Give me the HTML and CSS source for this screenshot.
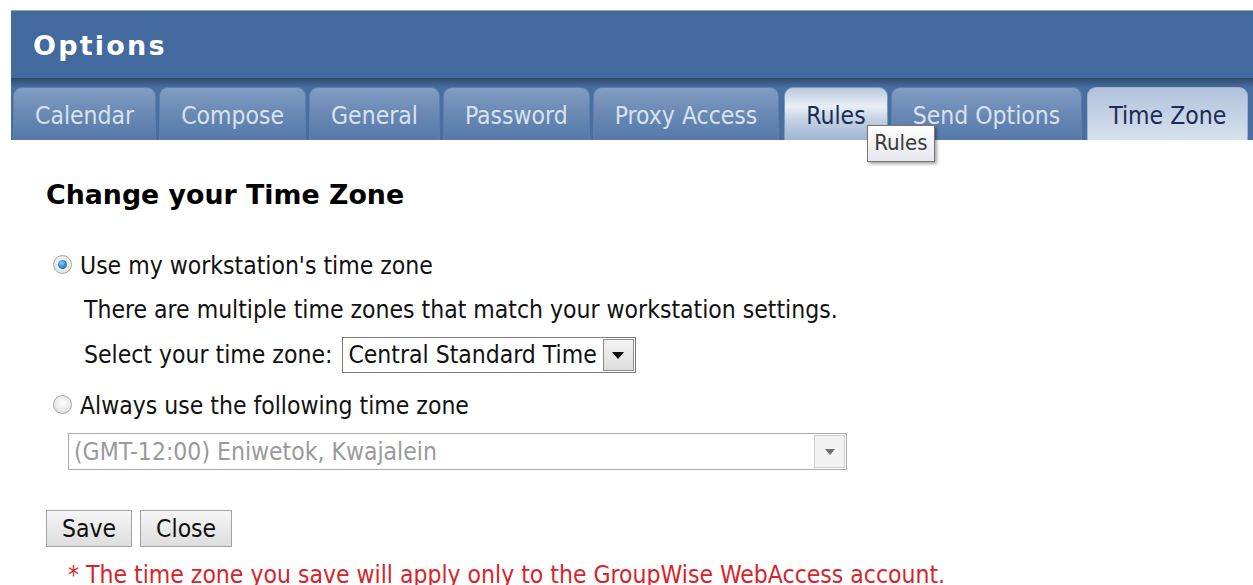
FILE: index.html
```html
<!DOCTYPE html>
<html lang="en">
<head>
<meta charset="utf-8">
<title>Options</title>
<link rel="stylesheet" href="styles.css">
</head>
<body>
<div class="window">
  <div class="titlebar"><span class="title">Options</span></div>
  <div class="tabbar">
    <div class="tab">Calendar</div>
    <div class="tab">Compose</div>
    <div class="tab">General</div>
    <div class="tab">Password</div>
    <div class="tab">Proxy Access</div>
    <div class="tab tab-hover">Rules<span class="tooltip">Rules</span></div>
    <div class="tab">Send Options</div>
    <div class="tab tab-active">Time Zone</div>
  </div>
  <div class="content">
    <h1 class="heading">Change your Time Zone</h1>
    <label class="radio-row">
      <input type="radio" name="tz" class="radio" checked>
      <span>Use my workstation's time zone</span>
    </label>
    <p class="info">There are multiple time zones that match your workstation settings.</p>
    <div class="select-row">
      <span>Select your time zone:</span>
      <div class="select select-small">
        <span class="select-value">Central Standard Time</span>
        <span class="select-btn"><span class="arrow"></span></span>
      </div>
    </div>
    <label class="radio-row radio-row-2">
      <input type="radio" name="tz" class="radio">
      <span>Always use the following time zone</span>
    </label>
    <div class="select select-wide disabled">
      <span class="select-value">(GMT-12:00) Eniwetok, Kwajalein</span>
      <span class="select-btn"><span class="arrow"></span></span>
    </div>
    <div class="buttons">
      <button class="btn">Save</button>
      <button class="btn">Close</button>
    </div>
    <p class="note">* The time zone you save will apply only to the GroupWise WebAccess account.</p>
  </div>
</div>
</body>
</html>
```

FILE: styles.css
```css
html, body {
  margin: 0;
  padding: 0;
  background: #ffffff;
  overflow: hidden;
}

body {
  font-family: "DejaVu Sans Condensed", "DejaVu Sans", sans-serif;
  font-size: 24.5px;
  line-height: 28px;
  color: #111111;
}

.window {
  margin: 10px 0 0 11px;
  border-top: 1px solid #9aa3ad;
}

.titlebar {
  height: 67px;
  box-sizing: border-box;
  padding: 3px 0 0 22px;
  background: #436a9e;
  display: flex;
  align-items: center;
}

.title {
  color: #ffffff;
  font-family: "DejaVu Sans", sans-serif;
  font-weight: bold;
  font-size: 27px;
  letter-spacing: 2.2px;
}

.tabbar {
  height: 62px;
  background: linear-gradient(to bottom, #2f4a6e 0px, #3d5d89 5px, #4a6ea0 10px, #4a6ea0 100%);
  display: flex;
  align-items: flex-end;
  gap: 3px;
  padding-left: 2px;
}

.tab {
  position: relative;
  height: 53px;
  box-sizing: border-box;
  padding: 4px 21px 0;
  display: flex;
  align-items: center;
  color: #d8e2ef;
  background: linear-gradient(to bottom, #819dc3 0%, #6e8cb6 40%, #5479aa 100%);
  border: 1px solid #5c7fae;
  border-bottom: none;
  border-radius: 9px 9px 0 0;
  white-space: nowrap;
}

.tab-hover {
  color: #1d2b57;
  margin-left: 2px;
  background: linear-gradient(to bottom, #b9c9de 0%, #e9eef5 35%, #c5d3e4 60%, #9fb6d3 100%);
  border-color: #7c98bf;
}

.tab-active {
  color: #1d2b57;
  margin-left: 2px;
  background: linear-gradient(to bottom, #afc2dc 0%, #c3d2e5 50%, #d8e2ee 100%);
  border-color: #9cb3d1;
}

.tooltip {
  position: absolute;
  left: 82px;
  top: 37px;
  padding: 3px 6px 4px;
  font-size: 22px;
  color: #3a3a3a;
  background: linear-gradient(to bottom, #ffffff, #e6e6ee);
  border: 1px solid #767676;
  box-shadow: 2px 2px 3px rgba(0, 0, 0, 0.35);
  z-index: 2;
}

.content {
  padding: 39px 0 0 35px;
}

.heading {
  margin: 0 0 41px;
  font-family: "DejaVu Sans", sans-serif;
  font-size: 26.8px;
  line-height: 32px;
  font-weight: bold;
  color: #000000;
}

.radio-row {
  display: flex;
  align-items: center;
  gap: 8px;
  padding-left: 7px;
  height: 28px;
}

.radio {
  appearance: none;
  -webkit-appearance: none;
  margin: 0;
  width: 19px;
  height: 19px;
  border-radius: 50%;
  border: 1px solid #a7a7a7;
  background: radial-gradient(circle at 50% 40%, #ffffff 0%, #e4e4e4 70%, #cfcfcf 100%);
  position: relative;
  top: -2px;
}

.radio:checked::after {
  content: "";
  position: absolute;
  left: 4px;
  top: 4px;
  width: 9px;
  height: 9px;
  border-radius: 50%;
  background: radial-gradient(circle at 40% 35%, #8fd0f5 0%, #2a8ad0 50%, #1a5e98 100%);
}

.info {
  margin: 16px 0 0 38px;
}

.select-row {
  margin: 13px 0 0 38px;
  display: flex;
  align-items: center;
  gap: 10px;
}

.select {
  display: flex;
  align-items: stretch;
  height: 36px;
  box-sizing: border-box;
  border: 1px solid #7a7a7a;
  background: #ffffff;
}

.select-value {
  flex: 1;
  display: flex;
  align-items: center;
  padding: 0 5px 0 5px;
  white-space: nowrap;
}

.select-btn {
  width: 31px;
  box-sizing: border-box;
  border: 1px solid #8c8c8c;
  margin: 1px;
  background: linear-gradient(to bottom, #f4f4f4, #dddddd);
  display: flex;
  align-items: center;
  justify-content: center;
}

.arrow {
  width: 0;
  height: 0;
  border-left: 6px solid transparent;
  border-right: 6px solid transparent;
  border-top: 7px solid #111111;
}

.radio-row-2 {
  margin-top: 19px;
}

.select-wide {
  margin: 13px 0 0 22px;
  width: 779px;
  height: 37px;
  border-color: #aaaaaa;
}

.select-wide .select-value {
  color: #9a9a9a;
}

.select-wide .select-btn {
  border-color: #cfcfcf;
  background: #f2f2f2;
}

.select-wide .arrow {
  border-top-color: #6e6e6e;
  border-left-width: 5px;
  border-right-width: 5px;
  border-top-width: 6px;
}

.buttons {
  display: flex;
  gap: 8px;
  margin-top: 40px;
}

.btn {
  height: 37px;
  padding: 0 15px;
  font: inherit;
  color: #111111;
  background: linear-gradient(to bottom, #f6f6f6, #dedede);
  border: 1px solid #a3a3a3;
  border-radius: 0;
}

.note {
  margin: 13px 0 0 22px;
  color: #d6242a;
  line-height: 30px;
}
```
